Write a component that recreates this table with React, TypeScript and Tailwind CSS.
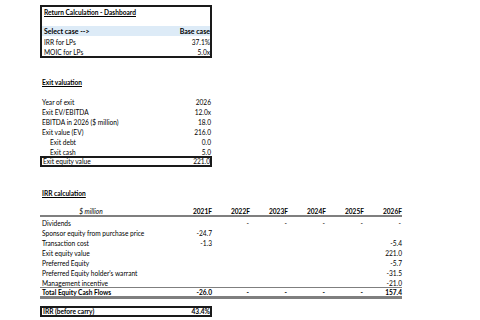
const years = ['2021F', '2022F', '2023F', '2024F', '2025F', '2026F'];

type Row = { label: string; values: string[] };

const irrRows: Row[] = [
    { label: 'Dividends', values: ['', '-', '-', '-', '-', '-'] },
    { label: 'Sponsor equity from purchase price', values: ['-24.7', '', '', '', '', ''] },
    { label: 'Transaction cost', values: ['-1.3', '', '', '', '', '-5.4'] },
    { label: 'Exit equity value', values: ['', '', '', '', '', '221.0'] },
    { label: 'Preferred Equity', values: ['', '', '', '', '', '-5.7'] },
    { label: "Preferred Equity holder's warrant", values: ['', '', '', '', '', '-31.5'] },
    { label: 'Management incentive', values: ['', '', '', '', '', '-21.0'] },
];

const exitRows = [
    { label: 'Year of exit', value: '2026' },
    { label: 'Exit EV/EBITDA', value: '12.0x' },
    { label: 'EBITDA in 2026 ($ million)', value: '18.0' },
    { label: 'Exit value (EV)', value: '216.0' },
    { label: 'Exit debt', value: '0.0', indent: true },
    { label: 'Exit cash', value: '5.0', indent: true },
];

function Cells({ values, bold }: { values: string[]; bold?: boolean }) {
    return (
        <>
            {values.map((v, i) => (
                <div key={i} className={`w-[38px] shrink-0 text-right ${bold ? 'font-bold' : ''}`}>
                    {v === '-' ? <span className="pr-[1px]">-</span> : v}
                </div>
            ))}
        </>
    );
}

export default function App() {
    return (
        <div
            className="h-[320px] w-[480px] overflow-hidden bg-white pl-[40px] pt-[5px] text-[6.6px] leading-[10px] text-black"
            style={{ fontFamily: 'Lato, "Liberation Sans", sans-serif' }}
        >
            {/* Dashboard box */}
            <div className="w-[172px] overflow-hidden border-2 border-[#1a1a1a]">
                <div className="h-[10px] pl-[2px] font-bold underline">Return Calculation - Dashboard</div>
                <div className="h-[9px]" />
                <div className="flex h-[10px] justify-between bg-[#ddebf7] pl-[2px] text-[7px] font-bold">
                    <span>Select case --&gt;</span>
                    <span>Base case</span>
                </div>
                <div className="flex h-[10px] justify-between pl-[2px] pt-[1px]">
                    <span>IRR for LPs</span>
                    <span>37.1%</span>
                </div>
                <div className="flex h-[10px] justify-between pl-[2px] pt-[1px]">
                    <span>MOIC for LPs</span>
                    <span>5.0x</span>
                </div>
            </div>

            {/* Exit valuation */}
            <div className="mt-[19px] h-[10px] pl-[2px] font-bold underline">Exit valuation</div>
            <div className="mt-[9px] w-[172px]">
                {exitRows.map(r => (
                    <div key={r.label} className="flex h-[10px] justify-between pr-[1px] pt-[1px]">
                        <span className={r.indent ? 'pl-[10px]' : 'pl-[2px]'}>{r.label}</span>
                        <span>{r.value}</span>
                    </div>
                ))}
                <div className="flex h-[11px] items-center justify-between border-2 border-[#1a1a1a] pl-[1px] leading-none">
                    <span>Exit equity value</span>
                    <span>221.0</span>
                </div>
            </div>

            {/* IRR calculation */}
            <div className="mt-[21px] h-[10px] pl-[2px] font-bold underline">IRR calculation</div>
            <div className="mt-[8px] w-[362px]">
                <div className="flex h-[11px] border-b-2 border-[#7f7f7f] pt-[1px] leading-[9px]">
                    <div className="w-[134px] shrink-0">
                        <div className="w-[102px] text-center italic">$ million</div>
                    </div>
                    <Cells values={years} bold />
                </div>
                {irrRows.map(r => (
                    <div key={r.label} className="flex h-[10px] pt-[1px]">
                        <div className="w-[134px] shrink-0 pl-[2px]">{r.label}</div>
                        <Cells values={r.values} />
                    </div>
                ))}
                <div className="flex h-[12px] border-t border-b-[3px] border-[#7f7f7f] leading-[8px] font-bold">
                    <div className="w-[134px] shrink-0 pl-[2px]">Total Equity Cash Flows</div>
                    <Cells values={['-26.0', '-', '-', '-', '-', '157.4']} bold />
                </div>
            </div>

            <div className="mt-[7px] flex h-[11px] w-[172px] items-center justify-between border-2 border-[#1a1a1a] pl-[1px] font-bold leading-none">
                <span>IRR (before carry)</span>
                <span>43.4%</span>
            </div>
        </div>
    );
}
